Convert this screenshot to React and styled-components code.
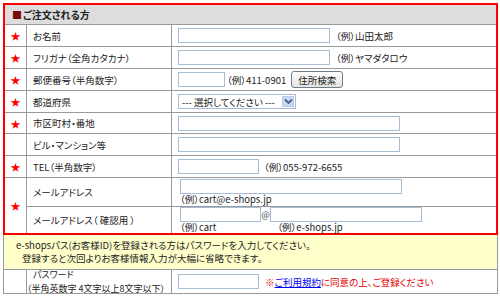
import React from 'react'
import styled, { createGlobalStyle } from 'styled-components';

const Global = createGlobalStyle`
    body {
        margin: 0;
        background: #fff;
        font-family: "Noto Sans CJK JP", "Noto Sans", sans-serif;
        font-size: 9.5px;
        color: #222;
        font-feature-settings: "palt";
    }
`;

const Star = () => <StarCell>★</StarCell>

const App = () => {
    return <Page>
        <Global/>
        <FormBox>
            <Header><Mark>■</Mark>ご注文される方</Header>

            <Star/>
            <Label>お名前</Label>
            <Field>
                <Input w={152}/>
                <Example gap={6}>（例）山田太郎</Example>
            </Field>

            <Star/>
            <Label>フリガナ（全角カタカナ）</Label>
            <Field>
                <Input w={152}/>
                <Example gap={6}>（例）ヤマダタロウ</Example>
            </Field>

            <Star/>
            <Label>郵便番号（半角数字）</Label>
            <Field>
                <Input w={47}/>
                <Example gap={2}>（例）411-0901</Example>
                <Button>住所検索</Button>
            </Field>

            <Star/>
            <Label>都道府県</Label>
            <Field>
                <Select>
                    <SelectText>--- 選択してください ---</SelectText>
                    <Arrow>
                        <svg width="9" height="7" viewBox="0 0 9 7">
                            <path d="M1 1.5 L4.5 5 L8 1.5" fill="none" stroke="#4d6185" strokeWidth="1.8"/>
                        </svg>
                    </Arrow>
                </Select>
            </Field>

            <Star/>
            <Label>市区町村・番地</Label>
            <Field>
                <Input w={222}/>
            </Field>

            <EmptyCell/>
            <Label>ビル・マンション等</Label>
            <Field>
                <Input w={222}/>
            </Field>

            <Star/>
            <Label>TEL（半角数字）</Label>
            <Field>
                <Input w={81}/>
                <Example gap={5}>（例）055-972-6655</Example>
            </Field>

            <StarCell span={2}>★</StarCell>
            <Label>メールアドレス</Label>
            <MailField>
                <Input w={222}/>
                <Example>（例）cart@e-shops.jp</Example>
            </MailField>

            <Label>メールアドレス（ 確認用 ）</Label>
            <MailField>
                <MailLine>
                    <Input w={81}/>
                    <At>@</At>
                    <Input w={152}/>
                </MailLine>
                <MailLine>
                    <Example>（例）cart</Example>
                    <Example gap={61}>（例）e-shops.jp</Example>
                </MailLine>
            </MailField>
        </FormBox>

        <RegisterBox>
            <Note>
                <NoteLine>e-shopsパス(お客様ID)を登録される方はパスワードを入力してください。</NoteLine>
                <NoteLine indent={6}>登録すると次回よりお客様情報入力が大幅に省略できます。</NoteLine>
            </Note>
            <EmptyCell/>
            <PassLabel>
                <span>パスワード</span>
                <SubText>（半角英数字 4文字以上8文字以下）</SubText>
            </PassLabel>
            <Field>
                <Input w={81}/>
                <Agree>※<TermsLink>ご利用規約</TermsLink>に同意の上、ご登録ください</Agree>
            </Field>
        </RegisterBox>
    </Page>
}

const Page = styled.div`
    padding: 3px;
    width: 495px;
`;

const FormBox = styled.div`
    display: grid;
    grid-template-columns: 21px 144px 1fr;
    grid-template-rows: 19px 21px 21px 21px 21px 20px 21px 21px 28px 26px;
    gap: 1px;
    background: #9a9a9a;
    border: 2px solid #ff0000;
`;

const Header = styled.div`
    grid-column: 1 / -1;
    display: flex;
    align-items: center;
    padding-left: 7px;
    background: #dddddd;
    font-weight: bold;
    font-size: 10px;
    color: #222;
`;

const Mark = styled.span`
    color: #7a0a0a;
    margin-right: 1px;
`;

const StarCell = styled.div`
    grid-row: ${props => (props.span ? `span ${props.span}` : 'auto')};
    display: flex;
    align-items: center;
    justify-content: center;
    background: #fff;
    color: #ff0000;
    font-size: 10px;
`;

const EmptyCell = styled.div`
    background: #fff;
`;

const Label = styled.div`
    display: flex;
    align-items: center;
    padding-left: 6px;
    background: #fff;
    color: #222;
`;

const Field = styled.div`
    display: flex;
    align-items: center;
    padding-left: 6px;
    background: #fff;
`;

const MailField = styled.div`
    display: flex;
    flex-direction: column;
    justify-content: center;
    padding-left: 8px;
    background: #fff;
    line-height: 11px;
`;

const MailLine = styled.div`
    display: flex;
    align-items: center;
`;

const Input = styled.input`
    box-sizing: border-box;
    width: ${props => props.w}px;
    height: 15px;
    margin: 0;
    padding: 0;
    border: 1px solid #a7bcd6;
    background: #fff;
`;

const Example = styled.span`
    margin-left: ${props => (props.gap ? props.gap : 0)}px;
    color: #222;
    white-space: nowrap;
`;

const At = styled.span`
    display: flex;
    align-items: center;
    justify-content: center;
    width: 9px;
    height: 15px;
    font-size: 9px;
    color: #444;
`;

const Button = styled.div`
    box-sizing: border-box;
    display: flex;
    align-items: center;
    justify-content: center;
    width: 52px;
    height: 17px;
    margin-left: 5px;
    border: 1px solid #6f7c8c;
    border-radius: 3px;
    background: linear-gradient(#ffffff, #e4e4e0);
    color: #222;
`;

const Select = styled.div`
    box-sizing: border-box;
    display: flex;
    align-items: center;
    justify-content: space-between;
    width: 118px;
    height: 15px;
    padding: 0 1px 0 3px;
    border: 1px solid #a7bcd6;
    background: #fff;
`;

const SelectText = styled.span`
    color: #222;
    white-space: nowrap;
`;

const Arrow = styled.span`
    display: flex;
    align-items: center;
    justify-content: center;
    width: 12px;
    height: 11px;
    background: #c9d8f5;
    border: 1px solid #b8c9ec;
    box-sizing: border-box;
`;

const RegisterBox = styled.div`
    display: grid;
    grid-template-columns: 22px 144px 1fr;
    grid-template-rows: 34px 23px;
    gap: 1px;
    background: #9a9a9a;
    border: 1px solid #9a9a9a;
    border-top: none;
`;

const Note = styled.div`
    grid-column: 1 / -1;
    display: flex;
    flex-direction: column;
    padding: 4px 0 0 12px;
    background: #ffffcc;
    line-height: 12.5px;
    color: #222;
`;

const NoteLine = styled.div`
    padding-left: ${props => (props.indent ? props.indent : 0)}px;
`;

const PassLabel = styled.div`
    display: flex;
    flex-direction: column;
    justify-content: center;
    padding-left: 6px;
    background: #fff;
    font-size: 9px;
    line-height: 13.5px;
    color: #222;
`;

const SubText = styled.span`
    margin-left: -6px;
    white-space: nowrap;
`;

const Agree = styled.span`
    margin-left: 6px;
    color: #e00000;
`;

const TermsLink = styled.a`
    color: #0000ee;
    text-decoration: underline;
`;

export default App;
